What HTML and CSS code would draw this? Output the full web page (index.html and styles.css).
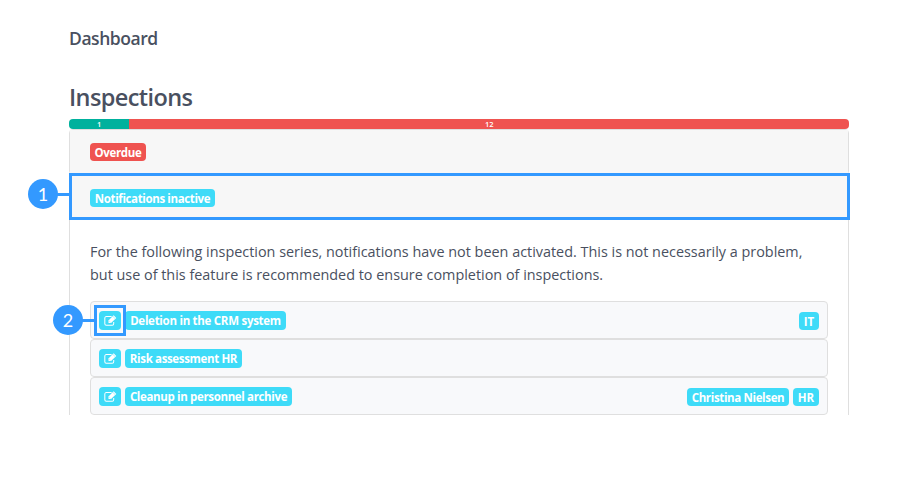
FILE: index.html
```html
<!DOCTYPE html>
<html lang="en">
<head>
  <meta charset="UTF-8">
  <meta name="viewport" content="width=device-width, initial-scale=1.0">
  <title>Dashboard</title>
  <link rel="stylesheet" href="styles.css">
</head>
<body>
  <svg width="0" height="0" class="sprite">
    <symbol id="edit" viewBox="0 0 14 12">
      <path d="M10.5 7.5v2a1.6 1.6 0 0 1-1.6 1.6H2.4A1.6 1.6 0 0 1 .8 9.5V3.3a1.6 1.6 0 0 1 1.6-1.6h5.8" fill="none" stroke="currentColor" stroke-width="1.1"/>
      <path d="M4.8 8.8V6.1L10.5.4l2.8 2.8-5.7 5.6z" fill="currentColor"/>
      <path d="M5.7 6.6l1.3 1.3M9.6 1.5l2.5 2.5" fill="none" stroke="#3edbf8" stroke-width=".5"/>
    </symbol>
  </svg>
  <div class="container">
    <h2>Dashboard</h2>
    <h1>Inspections</h1>
    <div class="progress">
      <div class="bar done" style="width: 7.75%">1</div>
      <div class="bar late">12</div>
    </div>
    <div class="card">
      <div class="card-header"><span class="badge danger">Overdue</span></div>
    </div>
    <div class="card open">
      <div class="card-header second">
        <span class="badge notif">Notifications inactive</span>
        <div class="highlight"><span class="marker">1</span></div>
      </div>
      <div class="card-body">
        <p><span class="line1">For the following inspection series, notifications have not been activated. This is not necessarily a problem,</span> <span class="line2">but use of this feature is recommended to ensure completion of inspections.</span></p>
        <div class="item">
          <a class="edit"><svg><use href="#edit"/></svg>
            <div class="highlight small"><span class="marker">2</span></div>
          </a>
          <span class="badge title deletion">Deletion in the CRM system</span>
          <div class="tags"><span class="badge it">IT</span></div>
        </div>
        <div class="item">
          <a class="edit"><svg><use href="#edit"/></svg></a>
          <span class="badge title risk">Risk assessment HR</span>
        </div>
        <div class="item">
          <a class="edit"><svg><use href="#edit"/></svg></a>
          <span class="badge title cleanup">Cleanup in personnel archive</span>
          <div class="tags">
            <span class="badge person">Christina Nielsen</span>
            <span class="badge hr">HR</span>
          </div>
        </div>
      </div>
    </div>
  </div>
</body>
</html>
```
FILE: styles.css
```css
* {
  box-sizing: border-box;
}
body {
  margin: 0;
  background: #fff;
  color: #495060;
  font-family: "Open Sans", "Noto Sans", sans-serif;
  font-size: 14.4px;
}
.sprite {
  position: absolute;
}
.container {
  width: 780px;
  margin-left: 69px;
  padding-top: 26px;
}
h1, h2 {
  margin: 0;
  font-weight: 600;
  color: #495060;
}
h2 {
  font-size: 17.5px;
  line-height: 25px;
  height: 24px;
  letter-spacing: -0.45px;
}
h1 {
  margin-top: 31px;
  font-size: 23.5px;
  line-height: 32px;
  height: 38px;
  letter-spacing: -0.6px;
}
.progress {
  display: flex;
  height: 10px;
  border-radius: 4px;
  overflow: hidden;
  color: #fff;
  font-size: 7.5px;
  font-weight: 600;
  line-height: 10px;
  text-align: center;
}
.done {
  background: #00b19d;
}
.late {
  flex: 1;
  background: #ef5350;
}
.card {
  border: 1px solid #dfdfdf;
  border-radius: 4px;
}
.card.open {
  border-top: 0;
  border-bottom: 0;
  border-radius: 0;
}
.card-header {
  height: 44px;
  padding: 13px 20px;
  background: #f7f7f7;
}
.card-header.second {
  position: relative;
  padding-top: 14px;
}
.badge {
  display: block;
  width: max-content;
  height: 18px;
  border-radius: 4px;
  background: #3edbf8;
  color: #fff;
  font-size: 11.5px;
  font-weight: 700;
  line-height: 19px;
  text-align: center;
  white-space: nowrap;
}
.danger {
  width: 56px;
  background: #ef5350;
  letter-spacing: -0.35px;
}
.notif {
  width: 125px;
  letter-spacing: -0.37px;
}
.card-body {
  padding: 21px 20px 0;
}
p {
  margin: 0 0 15px;
  line-height: 23px;
  white-space: nowrap;
}
.line1, .line2 {
  display: block;
}
.item {
  display: flex;
  align-items: center;
  height: 38px;
  padding: 0 8px;
  border: 1px solid #dfdfdf;
  border-radius: 4px;
  background: #f8f9fb;
}
.edit {
  position: relative;
  display: flex;
  align-items: center;
  justify-content: center;
  width: 22px;
  height: 19px;
  margin-right: 4px;
  border-radius: 4px;
  background: #3edbf8;
  color: #fff;
}
.edit svg {
  width: 13px;
  height: 11px;
}
.title {
  height: 19px;
}
.deletion {
  width: 161px;
  letter-spacing: -0.28px;
}
.risk {
  width: 117px;
  letter-spacing: -0.35px;
}
.cleanup {
  width: 167px;
  letter-spacing: -0.35px;
}
.tags {
  display: flex;
  gap: 4px;
  margin: 1px 0 0 auto;
}
.it {
  width: 20px;
}
.hr {
  width: 26px;
}
.person {
  width: 102px;
  letter-spacing: -0.35px;
}

/* callouts */
.highlight {
  position: absolute;
  top: -2px;
  left: -1px;
  width: 781px;
  height: 47px;
  border: 3px solid #3399ff;
}
.highlight.small {
  top: -6px;
  left: -5px;
  width: 32px;
  height: 31px;
}
.marker {
  position: absolute;
  top: 3px;
  left: -44px;
  width: 30px;
  height: 30px;
  border-radius: 50%;
  background: #3399ff;
  color: #fff;
  font-family: Lato, sans-serif;
  font-size: 18px;
  line-height: 30px;
  text-align: center;
}
.marker::after {
  content: "";
  position: absolute;
  top: 14px;
  left: 29px;
  width: 13px;
  height: 3px;
  background: #3399ff;
}
.small .marker {
  top: -3px;
}
```
